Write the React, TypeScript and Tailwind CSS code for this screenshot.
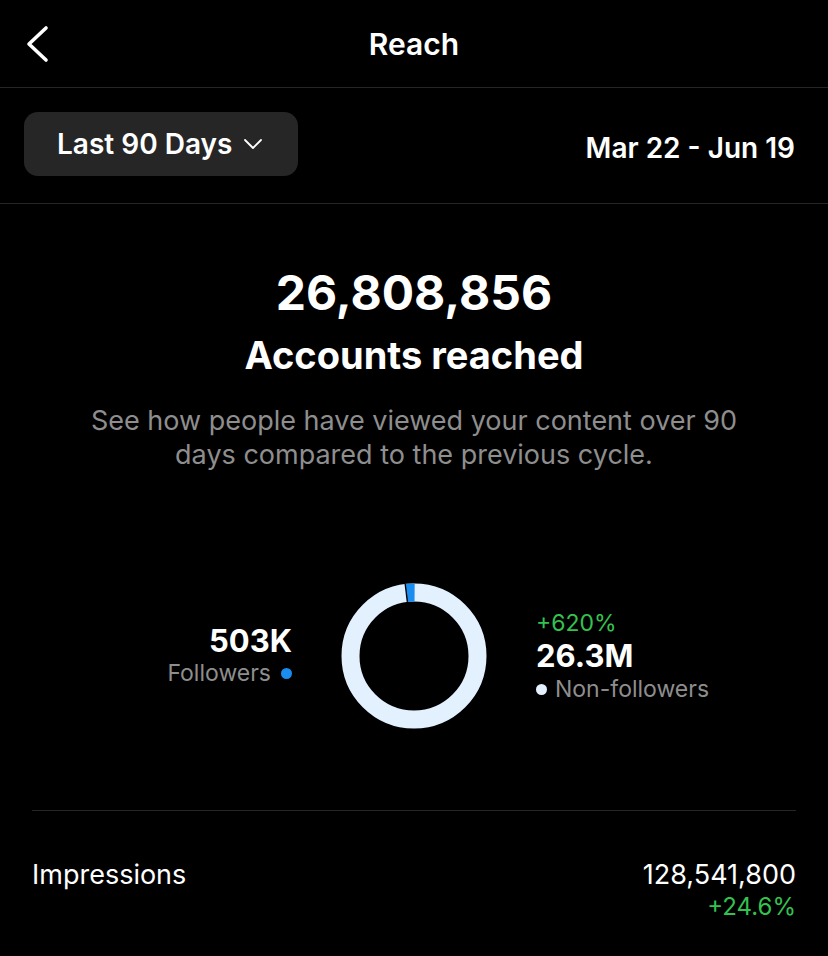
import React from 'react';

const FONT = { fontFamily: 'Inter, "Noto Sans", sans-serif' };

const BackIcon = () => (
  <svg width="24" height="38" viewBox="0 0 24 38" fill="none">
    <path d="M21 3 L4 19 L21 35" stroke="white" strokeWidth="3.6" strokeLinecap="round" strokeLinejoin="round" />
  </svg>
);

const ChevronDown = () => (
  <svg width="20" height="12" viewBox="0 0 20 12" fill="none">
    <path d="M2 2 L10 10 L18 2" stroke="white" strokeWidth="1.8" strokeLinecap="round" strokeLinejoin="round" />
  </svg>
);

// followers share is ~1.9% of the ring, drawn left of 12 o'clock
const Donut = () => (
  <svg width="146" height="146" viewBox="0 0 146 146">
    <circle cx="73" cy="73" r="63.5" fill="none" stroke="#e3f1fe" strokeWidth="18" />
    <path d="M65.26 9.97 A63.5 63.5 0 0 1 73.6 9.5" fill="none" stroke="#1a8cf0" strokeWidth="18" />
    <line x1="66.4" y1="18.8" x2="64.2" y2="1" stroke="black" strokeWidth="1.4" />
  </svg>
);

const App: React.FC = () => {
  return (
    <div className="w-[828px] h-[956px] bg-black text-white overflow-hidden" style={FONT}>
      <header className="h-[88px] grid grid-cols-[1fr_auto_1fr] items-center border-b border-[#262626]">
        <div className="pl-[25px] flex items-center">
          <BackIcon />
        </div>
        <h1 className="text-[30px] leading-[34px] font-semibold">Reach</h1>
        <div />
      </header>

      <div className="h-[116px] flex items-start justify-between pl-[24px] pr-[33px] pt-[24px] border-b border-[#262626]">
        <button className="h-[64px] w-[274px] rounded-[14px] bg-[#262626] flex items-center gap-[11px] pl-[33px]">
          <span className="text-[28px] leading-[32px] font-semibold">Last 90 Days</span>
          <ChevronDown />
        </button>
        <span className="mt-[20px] text-[28px] leading-[32px] font-semibold">Mar 22 - Jun 19</span>
      </div>

      <section className="flex flex-col items-center text-center">
        <div className="mt-[65px] text-[48px] leading-[48px] font-bold">26,808,856</div>
        <div className="mt-[14px] text-[38px] leading-[48px] font-bold">Accounts reached</div>
        <p className="mt-[25px] w-[690px] text-[27px] leading-[34px] text-[#8e8e8e]">
          See how people have viewed your content over 90 days compared to the previous cycle.
        </p>

        <div className="mt-[111px] w-full grid grid-cols-[1fr_auto_1fr] items-center gap-[49px]">
          <div className="flex flex-col items-end">
            <span className="text-[31px] leading-[34px] font-bold">503K</span>
            <span className="flex items-center gap-[10px] text-[23px] leading-[30px] text-[#8e8e8e]">
              Followers
              <span className="w-[11px] h-[11px] rounded-full bg-[#1a8cf0]" />
            </span>
          </div>
          <Donut />
          <div className="flex flex-col items-start">
            <span className="text-[23px] leading-[30px] text-[#34c24f]">+620%</span>
            <span className="text-[31px] leading-[36px] font-bold">26.3M</span>
            <span className="flex items-center gap-[8px] text-[23px] leading-[30px] text-[#8e8e8e]">
              <span className="w-[11px] h-[11px] rounded-full bg-[#e3f1fe]" />
              Non-followers
            </span>
          </div>
        </div>
      </section>

      <div className="mx-[32px] mt-[81px] border-t border-[#262626]" />

      <div className="mx-[32px] mt-[47px] flex items-start justify-between">
        <span className="text-[27px] leading-[34px]">Impressions</span>
        <div className="flex flex-col items-end">
          <span className="text-[27px] leading-[34px]">128,541,800</span>
          <span className="text-[24px] leading-[30px] text-[#34c24f]">+24.6%</span>
        </div>
      </div>
    </div>
  );
};

export default App;
